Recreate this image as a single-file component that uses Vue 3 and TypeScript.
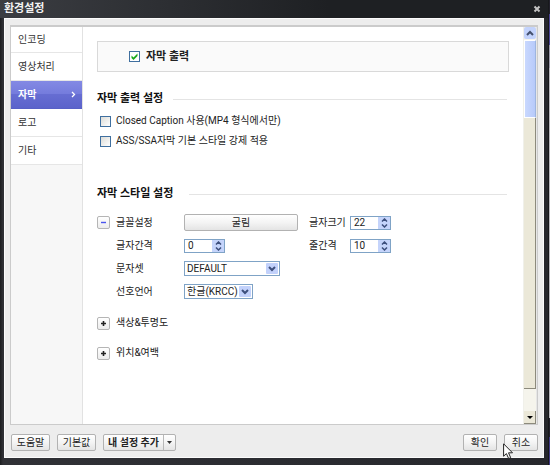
<script setup lang="ts">
import { ref } from 'vue'

const menu = ['인코딩', '영상처리', '자막', '로고', '기타']
const active = ref('자막')

const subtitleOn = ref(true)
const closedCaption = ref(false)
const forceStyle = ref(false)

const fontSize = ref(22)
const letterGap = ref(0)
const lineGap = ref(10)
const charset = ref('DEFAULT')
const language = ref('한글(KRCC)')
</script>

<template>
  <div class="desktop">
    <div class="window">
      <header class="titlebar">
        <h1>환경설정</h1>
        <button class="close" type="button" aria-label="닫기">
          <svg width="8" height="8" viewBox="0 0 8 8"><path d="M1.5 1.5l5 5M6.5 1.5l-5 5" stroke="#c4c4c4" stroke-width="2" /></svg>
        </button>
      </header>

      <div class="body">
        <div class="frame">
          <nav class="sidebar">
            <button
              v-for="item in menu"
              :key="item"
              type="button"
              class="item"
              :class="{ active: item === active }"
              @click="active = item"
            >
              <span>{{ item }}</span>
              <svg v-if="item === active" width="5" height="7" viewBox="0 0 5 7"><path d="M1 1l2.5 2.5L1 6" fill="none" stroke="#fff" stroke-width="1.3" /></svg>
            </button>
          </nav>

          <main class="content">
            <label class="banner">
              <input v-model="subtitleOn" type="checkbox" class="check" />
              <svg class="tick" width="11" height="11" viewBox="0 0 11 11"><path v-if="subtitleOn" d="M2.500 4.500v2.400l2 2 4-4V2.500l-4 4z" fill="#18a818" /></svg>
              <b>자막 출력</b>
            </label>

            <section class="output">
              <h2>자막 출력 설정</h2>
              <label class="option"><input v-model="closedCaption" type="checkbox" class="check" />Closed Caption 사용(MP4 형식에서만)</label>
              <label class="option"><input v-model="forceStyle" type="checkbox" class="check" />ASS/SSA자막 기본 스타일 강제 적용</label>
            </section>

            <section class="style">
              <h2 class="wide">자막 스타일 설정</h2>
              <div class="grid">
                <button class="toggle open" type="button" aria-label="접기">
                  <svg width="7" height="7" viewBox="0 0 7 7"><path d="M1 3.5h5" stroke="#4a55ee" stroke-width="1.4" /></svg>
                </button>
                <span class="name">글꼴설정</span>
                <button class="push font" type="button">굴림</button>
                <label for="size">글자크기</label>
                <div class="spin">
                  <input id="size" v-model.number="fontSize" type="text" />
                  <div class="arrows">
                    <button type="button" aria-label="증가" @click="fontSize++"><svg width="7" height="4" viewBox="0 0 7 4"><path d="M1 3.5L3.5 1 6 3.5" /></svg></button>
                    <button type="button" aria-label="감소" @click="fontSize--"><svg width="7" height="4" viewBox="0 0 7 4"><path d="M1 .5L3.5 3 6 .5" /></svg></button>
                  </div>
                </div>

                <label class="name" for="letter">글자간격</label>
                <div class="spin">
                  <input id="letter" v-model.number="letterGap" type="text" />
                  <div class="arrows">
                    <button type="button" aria-label="증가" @click="letterGap++"><svg width="7" height="4" viewBox="0 0 7 4"><path d="M1 3.5L3.5 1 6 3.5" /></svg></button>
                    <button type="button" aria-label="감소" @click="letterGap--"><svg width="7" height="4" viewBox="0 0 7 4"><path d="M1 .5L3.5 3 6 .5" /></svg></button>
                  </div>
                </div>
                <label for="line">줄간격</label>
                <div class="spin">
                  <input id="line" v-model.number="lineGap" type="text" />
                  <div class="arrows">
                    <button type="button" aria-label="증가" @click="lineGap++"><svg width="7" height="4" viewBox="0 0 7 4"><path d="M1 3.5L3.5 1 6 3.5" /></svg></button>
                    <button type="button" aria-label="감소" @click="lineGap--"><svg width="7" height="4" viewBox="0 0 7 4"><path d="M1 .5L3.5 3 6 .5" /></svg></button>
                  </div>
                </div>

                <label class="name" for="charset">문자셋</label>
                <div class="pick large">
                  <select id="charset" v-model="charset"><option>DEFAULT</option></select>
                  <span class="drop"><svg width="8" height="6" viewBox="0 0 8 6"><path d="M1 1l3 3 3-3" /></svg></span>
                </div>

                <label class="name" for="language">선호언어</label>
                <div class="pick">
                  <select id="language" v-model="language"><option>한글(KRCC)</option></select>
                  <span class="drop"><svg width="8" height="6" viewBox="0 0 8 6"><path d="M1 1l3 3 3-3" /></svg></span>
                </div>
              </div>

              <div class="group">
                <button class="toggle" type="button" aria-label="색상&amp;투명도 펼치기">
                  <svg width="7" height="7" viewBox="0 0 7 7"><path d="M1 3.5h5M3.5 1v5" stroke="#222" stroke-width="1.6" /></svg>
                </button>
                <span>색상&amp;투명도</span>
              </div>
              <div class="group">
                <button class="toggle" type="button" aria-label="위치&amp;여백 펼치기">
                  <svg width="7" height="7" viewBox="0 0 7 7"><path d="M1 3.5h5M3.5 1v5" stroke="#222" stroke-width="1.6" /></svg>
                </button>
                <span>위치&amp;여백</span>
              </div>
            </section>
          </main>

          <div class="scroll">
            <button class="up" type="button" aria-label="위로"><svg width="8" height="6" viewBox="0 0 8 6"><path d="M1 5l3-3 3 3" fill="none" stroke="#44506e" stroke-width="2" /></svg></button>
            <div class="thumb"></div>
            <div class="block"></div>
            <div class="track"></div>
            <button class="down" type="button" aria-label="아래로"><svg width="6" height="3" viewBox="0 0 6 3"><path d="M0 0h6L3 3z" fill="#000" /></svg></button>
          </div>
        </div>

        <footer class="footer">
          <button class="push small" type="button">도움말</button>
          <button class="push small" type="button">기본값</button>
          <div class="split">
            <button type="button">내 설정 추가</button>
            <button type="button" class="more" aria-label="더 보기"><svg width="5" height="3" viewBox="0 0 5 3"><path d="M0 0h5L2.500 3z" fill="#333" /></svg></button>
          </div>
          <span class="space"></span>
          <button class="push act" type="button">확인</button>
          <div class="last">
            <button class="push act" type="button">취소</button>
            <svg class="cursor" width="11" height="17" viewBox="0 0 11 17"><path d="M.6.8v12.400l2.800-2.600 2.300 5 2-.9-2.200-4.900h4z" fill="#fff" stroke="#222" stroke-width="1" /></svg>
          </div>
        </footer>
      </div>
    </div>
    <div class="behind"></div>
  </div>
</template>

<style>
body {
  margin: 0;
  background: #202126;
}
</style>

<style scoped>
* {
  box-sizing: border-box;
}

.desktop {
  display: flex;
  min-height: 100vh;
  font: 10px/14px Roboto, "Noto Sans CJK KR", sans-serif;
  color: #222;
}

button,
input,
select {
  font: inherit;
  color: inherit;
  margin: 0;
  padding: 0;
  border: 0;
  background: none;
}

button {
  display: flex;
  align-items: center;
  justify-content: center;
}

svg {
  display: block;
  flex: none;
}

.window {
  flex: 1;
  display: flex;
  flex-direction: column;
  padding: 0 4px 7px 4px;
  background: linear-gradient(90deg, #1b1c1f, #303136 3px, #26272c);
  border-right: 1px solid #17181b;
}

.titlebar {
  display: flex;
  align-items: center;
  justify-content: space-between;
  height: 18px;
  margin: 0 -4px;
  padding: 0 7px 1px 4px;
  background: linear-gradient(90deg, #3b3d42, #1e2023 60%);
}

h1 {
  margin: 0;
  font-size: 11px;
  line-height: 14px;
  color: #f2f2f2;
}

.behind {
  width: 1px;
  background: linear-gradient(#22212c 0 14px, #4b4593 14px 45px, #9a98a8 45px 68px, #b5b4ba 68px 90%, #22212c 90% 94%, #403a83 94%);
}

.body {
  flex: 1;
  display: flex;
  flex-direction: column;
  padding: 6px 5px;
  background: #ededed;
  border: 1px solid #fcfcfc;
}

.frame {
  flex: 1;
  display: flex;
  border: 1px solid #cbcbcb;
  border-top-width: 2px;
  background: #fff;
}

.sidebar {
  width: 72px;
  flex: none;
  background: #f7f7f7;
  border-right: 1px solid #e2e2e2;
}

.item {
  width: 100%;
  height: 28px;
  padding: 0 6px 0 7px;
  justify-content: space-between;
  background: #fff;
  border-bottom: 1px solid #e6e6e6;
  color: #333;
}

.item:first-child {
  height: 26px;
}

.item.active {
  font-weight: bold;
  color: #fff;
  border-color: #5760c6;
  background: linear-gradient(#8389e4, #747bdc 50%, #666dd2 50%, #5b63cb);
}

.content {
  flex: 1;
  min-width: 0;
  padding: 14px 14px 0 14px;
}

.banner {
  display: grid;
  grid-template-columns: 11px 1fr;
  column-gap: 6px;
  align-items: center;
  height: 31px;
  padding-left: 31px;
  border: 1px solid #d9d9d9;
  background: #fafafa;
}

.banner b {
  font-size: 11px;
}

.check {
  appearance: none;
  flex: none;
  width: 11px;
  height: 11px;
  border: 1px solid #3f6f9f;
  background: linear-gradient(135deg, #dcdcd7, #fff);
}

.check:checked {
  background: #fff;
}

.banner .check,
.tick {
  grid-area: 1 / 1;
}

.tick {
  z-index: 1;
  pointer-events: none;
}

h2 {
  display: flex;
  align-items: center;
  gap: 10px;
  margin: 0 2px 0 0;
  font-size: 11px;
  line-height: 16px;
  color: #111;
}

h2::after {
  content: "";
  flex: 1;
  height: 1px;
  background: #e4e4e4;
}

h2.wide {
  gap: 16px;
}

.output {
  margin-top: 19px;
}

.output h2 {
  margin-bottom: 4px;
}

.option {
  display: flex;
  align-items: center;
  gap: 5px;
  height: 20px;
  padding-left: 3px;
}

.style {
  margin-top: 35px;
}

.grid {
  display: grid;
  grid-template-columns: 19px 68px 125px 41px 1fr;
  grid-auto-rows: 23px;
  align-items: center;
  margin-top: 9px;
}

.name {
  grid-column: 2;
}

.toggle {
  width: 13px;
  height: 13px;
  border: 1px solid #b5b5b5;
  border-radius: 2px;
  background: linear-gradient(#fff, #ececec);
}

.group {
  display: flex;
  align-items: center;
  gap: 6px;
  height: 30px;
}

.grid + .group {
  margin-top: 5px;
}

.push {
  height: 17px;
  border: 1px solid #b2b2b2;
  border-radius: 2px;
  background: linear-gradient(#fff, #f4f4f4 50%, #e4e4e4);
}

.font {
  width: 114px;
}

.spin {
  display: flex;
  width: 41px;
  height: 14px;
  border: 1px solid #7fa3c6;
  background: #fff;
}

.spin input {
  flex: 1;
  min-width: 0;
  padding-left: 3px;
  line-height: 12px;
}

.arrows {
  width: 12px;
  display: flex;
  flex-direction: column;
  background: #c5d4fb;
}

.arrows button {
  flex: 1;
  min-height: 0;
}

.arrows path,
.drop path {
  fill: none;
  stroke: #3d4f7d;
  stroke-width: 2;
}

.arrows path {
  stroke-width: 1.5;
}

.pick {
  display: grid;
  grid-template-columns: 1fr 14px;
  width: 69px;
  height: 15px;
  border: 1px solid #7fa3c6;
  background: #fff;
}

.pick.large {
  width: 96px;
}

.pick select {
  grid-area: 1 / 1 / 2 / 3;
  appearance: none;
  min-width: 0;
  padding-left: 2px;
  line-height: 13px;
}

.drop {
  grid-area: 1 / 2;
  display: flex;
  align-items: center;
  justify-content: center;
  margin: 1px;
  background: #c2d1fb;
  border-radius: 1px;
  pointer-events: none;
}

.scroll {
  width: 14px;
  flex: none;
  display: flex;
  flex-direction: column;
  border-left: 1px solid #f0f0ea;
  border-right: 1px solid #e6e6e6;
  background: #f5f4ec;
}

.up {
  height: 12px;
  border-radius: 2px;
  background: #c3d3fc;
}

.thumb {
  height: 78px;
  margin-top: 1px;
  border: 1px solid #fff;
  border-right-color: #9db5df;
  background: linear-gradient(90deg, #c9d8fe, #b7cafa);
}

.block {
  flex: 1;
  background: #ebe8d8;
  border-right: 1px solid #8c8a7c;
  border-bottom: 1px solid #8c8a7c;
}

.track {
  height: 22px;
}

.down {
  height: 13px;
  background: #ebe8d8;
  border-right: 1px solid #8c8a7c;
  border-bottom: 1px solid #8c8a7c;
}

.footer {
  display: flex;
  align-items: center;
  gap: 7px;
  padding: 9px 0 0 1px;
}

.small {
  width: 39px;
}

.act {
  width: 34px;
}

.split {
  display: flex;
  height: 17px;
  border: 1px solid #b2b2b2;
  border-radius: 2px;
  background: linear-gradient(#fff, #f4f4f4 50%, #e4e4e4);
}

.split button {
  width: 59px;
  font-weight: bold;
  white-space: nowrap;
}

.split .more {
  width: 12px;
  border-left: 1px solid #b8b8b8;
}

.space {
  flex: 1;
}

.last {
  position: relative;
}

.cursor {
  position: absolute;
  left: -1px;
  top: 9px;
  z-index: 2;
}
</style>
